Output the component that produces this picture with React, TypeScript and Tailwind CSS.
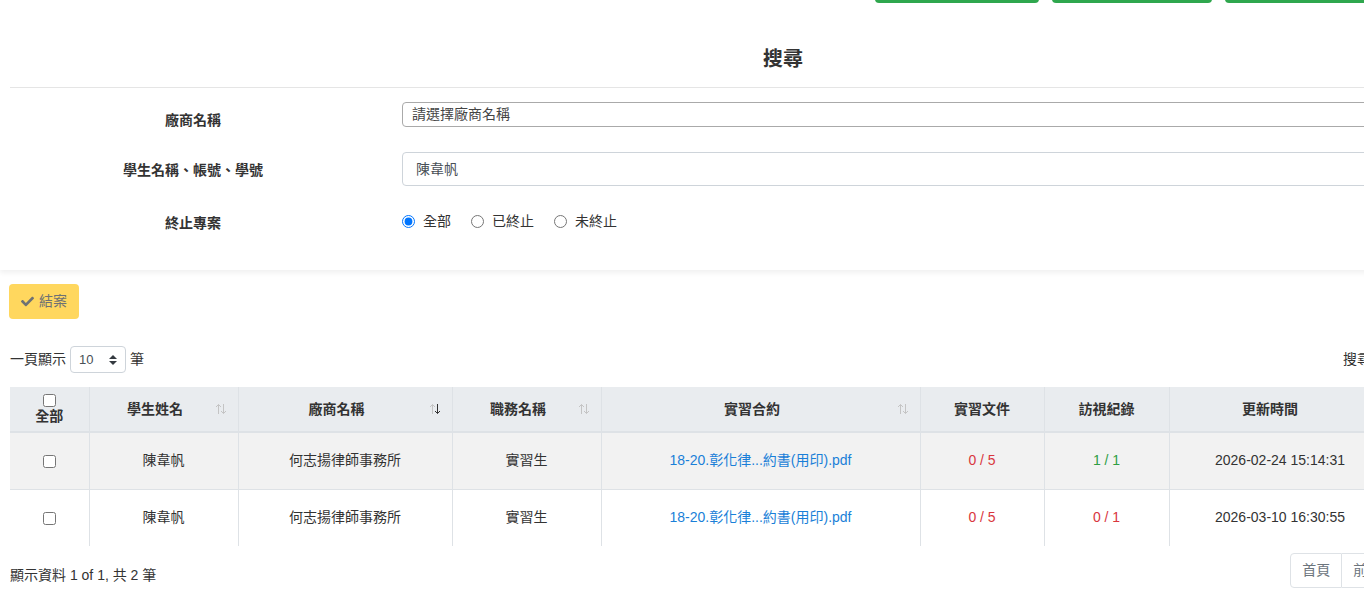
import { FaCheck } from "react-icons/fa";

const ROWS = [
  { name: "陳韋帆", company: "何志揚律師事務所", job: "實習生", file: "18-20.彰化律...約書(用印).pdf", docs: "0 / 5", visit: "1 / 1", visitOk: true, updated: "2026-02-24 15:14:31" },
  { name: "陳韋帆", company: "何志揚律師事務所", job: "實習生", file: "18-20.彰化律...約書(用印).pdf", docs: "0 / 5", visit: "0 / 1", visitOk: false, updated: "2026-03-10 16:30:55" },
];

function SortIcon({ active }: { active?: boolean }) {
  return (
    <svg
      className="absolute right-[11px] top-1/2 -translate-y-1/2"
      width="12"
      height="11"
      viewBox="0 0 12 11"
      fill="none"
      strokeWidth="1"
    >
      <path d="M3.5 10.5 V1 M1 3.5 L3.5 1 L6 3.5" stroke="#c4c4c4" />
      <path d="M8.5 0.5 V10 M6 7.5 L8.5 10 L11 7.5" stroke={active ? "#333" : "#c4c4c4"} />
    </svg>
  );
}

export default function App() {
  return (
    <div
      className="w-[1364px] h-[602px] overflow-hidden bg-white text-[14px] text-[#333]"
      style={{ fontFamily: '"Liberation Sans", "Noto Sans CJK TC", sans-serif' }}
    >
      <div className="w-[1566px]">
        {/* ── search card ── */}
        <div className="bg-white px-[10px] pb-[37px] shadow-[0_3px_5px_rgba(0,0,0,0.06)]">
          <div className="flex gap-[13px] ml-[865px] -mt-[35px] h-[38px]">
            <div className="w-[164px] rounded-[4px] bg-[#2fa74e]" />
            <div className="w-[160px] rounded-[4px] bg-[#2fa74e]" />
            <div className="w-[164px] rounded-[4px] bg-[#2fa74e]" />
          </div>

          <h2 className="mt-[41px] mb-[13px] text-center text-[20px] leading-[30px] font-bold">搜尋</h2>
          <div className="h-px bg-[#e5e5e5]" />

          <div className="mt-[14px] flex items-start h-[25px]">
            <div className="w-[366px] pt-[8px] text-center font-bold leading-[20px]">廠商名稱</div>
            <div className="ml-[26px] flex-1 h-[25px] rounded-[4px] border border-[#aaa] px-[9px] leading-[23px] text-[#444]">
              請選擇廠商名稱
            </div>
          </div>

          <div className="mt-[25px] flex items-start">
            <div className="w-[366px] pt-[8px] text-center font-bold leading-[20px]">學生名稱、帳號、學號</div>
            <div className="ml-[26px] flex-1 h-[34px] rounded-[4px] border border-[#ced4da] px-[13px] leading-[32px] text-[#495057]">
              陳韋帆
            </div>
          </div>

          <div className="mt-[25px] flex items-start">
            <div className="w-[366px] pt-[2px] text-center font-bold leading-[20px]">終止專案</div>
            <div className="ml-[26px] flex items-center h-[20px] gap-[20px]">
              <label className="flex items-center gap-[8px]">
                <input type="radio" name="end" defaultChecked className="m-0 w-[13px] h-[13px]" />
                全部
              </label>
              <label className="flex items-center gap-[8px]">
                <input type="radio" name="end" className="m-0 w-[13px] h-[13px]" />
                已終止
              </label>
              <label className="flex items-center gap-[8px]">
                <input type="radio" name="end" className="m-0 w-[13px] h-[13px]" />
                未終止
              </label>
            </div>
          </div>
        </div>

        {/* ── list ── */}
        <div className="px-[10px]">
          <button className="mt-[14px] -ml-px flex items-center gap-[5px] h-[35px] px-[12px] rounded-[4px] bg-[#ffd75e] text-[#6e7174]">
            <FaCheck className="w-[13px] h-[13px]" />
            結案
          </button>

          <div className="mt-[27px] flex items-center justify-between h-[27px]">
            <div className="flex items-center">
              一頁顯示
              <div className="ml-[4px] mr-[4px] flex items-center justify-between w-[56px] h-[27px] rounded-[4px] border border-[#ced4da] pl-[8px] pr-[8px] text-[13px] text-[#495057]">
                10
                <svg width="8" height="10" viewBox="0 0 8 10">
                  <path d="M4 0 L8 4 H0 Z M4 10 L8 6 H0 Z" fill="#343a40" />
                </svg>
              </div>
              筆
            </div>
            <div className="flex items-center gap-[2px]">
              搜尋
              <div className="w-[183px] h-[27px] rounded-[4px] border border-[#ced4da]" />
            </div>
          </div>

          <table className="mt-[14px] w-full border-collapse table-fixed">
            <colgroup>
              <col className="w-[79px]" />
              <col className="w-[149px]" />
              <col className="w-[214px]" />
              <col className="w-[149px]" />
              <col className="w-[319px]" />
              <col className="w-[124px]" />
              <col className="w-[125px]" />
              <col className="w-[222px]" />
              <col />
            </colgroup>
            <thead>
              <tr className="h-[45px] bg-[#e9ecef] font-bold">
                <th className="border-b-2 border-[#dee2e6] px-[4px] leading-[18px]">
                  <input type="checkbox" className="m-0 w-[13px] h-[13px] block mx-auto" />
                  全部
                </th>
                <th className="relative border-l border-b-2 border-[#dee2e6] pl-[12px] pr-[29px]">學生姓名<SortIcon /></th>
                <th className="relative border-l border-b-2 border-[#dee2e6] pl-[12px] pr-[29px]">廠商名稱<SortIcon active /></th>
                <th className="relative border-l border-b-2 border-[#dee2e6] pl-[12px] pr-[29px]">職務名稱<SortIcon /></th>
                <th className="relative border-l border-b-2 border-[#dee2e6] pl-[12px] pr-[29px]">實習合約<SortIcon /></th>
                <th className="border-l border-b-2 border-[#dee2e6]">實習文件</th>
                <th className="border-l border-b-2 border-[#dee2e6]">訪視紀錄</th>
                <th className="border-l border-b-2 border-[#dee2e6] pr-[20px]">更新時間</th>
                <th className="border-l border-b-2 border-[#dee2e6]">操作</th>
              </tr>
            </thead>
            <tbody>
              {ROWS.map((r, i) => (
                <tr key={i} className={`h-[57px] text-center ${i === 0 ? "bg-[#f2f2f2] border-b border-[#dee2e6]" : "bg-white"}`}>
                  <td>
                    <input type="checkbox" className="m-0 w-[13px] h-[13px] align-middle" />
                  </td>
                  <td className="border-l border-[#dee2e6]">{r.name}</td>
                  <td className="border-l border-[#dee2e6]">{r.company}</td>
                  <td className="border-l border-[#dee2e6]">{r.job}</td>
                  <td className="border-l border-[#dee2e6] text-[#1a7fd8]">{r.file}</td>
                  <td className="border-l border-[#dee2e6] text-[#d9363e]">{r.docs}</td>
                  <td className={`border-l border-[#dee2e6] ${r.visitOk ? "text-[#2f9e44]" : "text-[#d9363e]"}`}>{r.visit}</td>
                  <td className="border-l border-[#dee2e6]">{r.updated}</td>
                  <td className="border-l border-[#dee2e6]" />
                </tr>
              ))}
            </tbody>
          </table>

          <div className="mt-[7px] flex items-start justify-between">
            <div className="mt-[12px] leading-[20px]">顯示資料 1 of 1, 共 2 筆</div>
            <div className="flex h-[35px] text-[#6c757d]">
              <span className="flex items-center px-[11px] border border-[#dee2e6] rounded-l-[4px]">首頁</span>
              <span className="flex items-center px-[11px] border border-l-0 border-[#dee2e6]">前一頁</span>
              <span className="flex items-center px-[12px] border border-l-0 border-[#dee2e6] bg-[#007bff] text-white">1</span>
              <span className="flex items-center px-[11px] border border-l-0 border-[#dee2e6]">下一頁</span>
              <span className="flex items-center px-[11px] border border-l-0 border-[#dee2e6] rounded-r-[4px]">末頁</span>
            </div>
          </div>
        </div>
      </div>
    </div>
  );
}
